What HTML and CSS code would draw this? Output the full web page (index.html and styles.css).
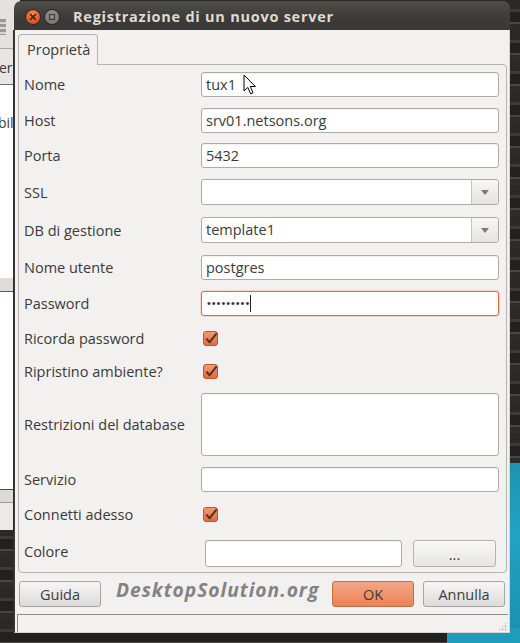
FILE: index.html
```html
<!DOCTYPE html>
<html lang="it">
<head>
<meta charset="utf-8">
<title>Registrazione di un nuovo server</title>
<link rel="stylesheet" href="styles.css">
</head>
<body>
<div class="desktop">
  <div class="teal-right"></div>
  <div class="teal-bottom"></div>

  <div class="bgwin">
    <div class="bw-top"><div class="bw-icon"></div></div>
    <div class="bw-tool"><span class="bw-txt">er</span></div>
    <div class="bw-list"><span class="bw-txt bw-bil">bil</span></div>
    <div class="bw-head"></div>
    <div class="bw-list2"></div>
    <div class="bw-foot1"></div>
    <div class="bw-foot2"></div>
  </div>

  <div class="dialog">
    <div class="titlebar">
      <span class="wbtn close">
        <svg width="14" height="14" viewBox="0 0 14 14"><path d="M4.6 4.6 L9.4 9.4 M9.4 4.6 L4.6 9.4" stroke="#3b2418" stroke-width="1.6" stroke-linecap="round"/></svg>
      </span>
      <span class="wbtn maxi">
        <svg width="14" height="14" viewBox="0 0 14 14"><rect x="4.5" y="4.5" width="5" height="5" fill="none" stroke="#3f3e3a" stroke-width="1.3"/></svg>
      </span>
      <span class="title">Registrazione di un nuovo server</span>
    </div>

    <div class="body">
      <div class="tabs"><div class="tab">Proprietà</div></div>

      <div class="pane">
        <div class="row h36"><span class="lbl">Nome</span><div class="ctl"><div class="entry">tux1</div></div></div>
        <div class="row h36"><span class="lbl">Host</span><div class="ctl"><div class="entry">srv01.netsons.org</div></div></div>
        <div class="row h35"><span class="lbl">Porta</span><div class="ctl"><div class="entry">5432</div></div></div>
        <div class="row h38"><span class="lbl">SSL</span><div class="ctl"><div class="combo"><span class="combo-text"></span><span class="combo-arrow"><span class="tri"></span></span></div></div></div>
        <div class="row h38"><span class="lbl">DB di gestione</span><div class="ctl"><div class="combo"><span class="combo-text">template1</span><span class="combo-arrow"><span class="tri"></span></span></div></div></div>
        <div class="row h36"><span class="lbl">Nome utente</span><div class="ctl"><div class="entry">postgres</div></div></div>
        <div class="row h36"><span class="lbl">Password</span><div class="ctl"><div class="entry focus"><span class="dots">•••••••••</span><span class="caret"></span></div></div></div>
        <div class="row h34"><span class="lbl">Ricorda password</span><div class="ctl"><span class="check"><svg width="15" height="15" viewBox="0 0 15 15"><defs><linearGradient id="cg1" x1="0" y1="0" x2="0" y2="1"><stop offset="0" stop-color="#f49d74"/><stop offset="1" stop-color="#e2683a"/></linearGradient></defs><rect x="0.5" y="0.5" width="14" height="14" rx="2.5" fill="url(#cg1)" stroke="#c0532c"/><path d="M3.3 7.6 L6.6 11.2 L13.6 2.4" fill="none" stroke="#4e362b" stroke-width="2.1" stroke-linejoin="round"/></svg></span></div></div>
        <div class="row h33"><span class="lbl">Ripristino ambiente?</span><div class="ctl"><span class="check"><svg width="15" height="15" viewBox="0 0 15 15"><rect x="0.5" y="0.5" width="14" height="14" rx="2.5" fill="url(#cg1)" stroke="#c0532c"/><path d="M3.3 7.6 L6.6 11.2 L13.6 2.4" fill="none" stroke="#4e362b" stroke-width="2.1" stroke-linejoin="round"/></svg></span></div></div>
        <div class="row h73"><span class="lbl">Restrizioni del database</span><div class="ctl"><div class="textarea"></div></div></div>
        <div class="row h37"><span class="lbl">Servizio</span><div class="ctl"><div class="entry"></div></div></div>
        <div class="row h33"><span class="lbl">Connetti adesso</span><div class="ctl"><span class="check"><svg width="15" height="15" viewBox="0 0 15 15"><rect x="0.5" y="0.5" width="14" height="14" rx="2.5" fill="url(#cg1)" stroke="#c0532c"/><path d="M3.3 7.6 L6.6 11.2 L13.6 2.4" fill="none" stroke="#4e362b" stroke-width="2.1" stroke-linejoin="round"/></svg></span></div></div>
        <div class="row h36 row-end"><span class="lbl lbl-colore">Colore</span><div class="ctl"><div class="entry colore"></div><div class="btn small">...</div></div></div>
      </div>

      <div class="actions">
        <div class="btn">Guida</div>
        <span class="watermark">DesktopSolution.org</span>
        <div class="btn ok">OK</div>
        <div class="btn">Annulla</div>
      </div>

      <div class="status"><span class="grip"></span></div>
    </div>
  </div>

  <svg class="cursor" width="14" height="22" viewBox="0 0 14 22"><path d="M1 1 L1 17 L4.8 13.4 L7.6 19.8 L10 18.8 L7.3 12.5 L12.4 12.5 Z" fill="#ffffff" stroke="#000000" stroke-width="1" stroke-linejoin="round"/></svg>
</div>
</body>
</html>
```
FILE: styles.css
```css
html, body {
  margin: 0;
  padding: 0;
}
body {
  background: #2a2826;
  font-family: "Open Sans", "DejaVu Sans", sans-serif;
  font-size: 14.5px;
  color: #3a3a3a;
}
.desktop {
  position: relative;
  width: 520px;
  height: 643px;
  overflow: hidden;
  background: repeating-linear-gradient(180deg, #2b2927 0 9px, #3d3b38 9px 12px, #232120 12px 22px, #4a4743 22px 24px, #2e2c29 24px 31px);
}
.teal-right {
  position: absolute;
  left: 508px;
  top: 463px;
  width: 12px;
  height: 180px;
  background: linear-gradient(180deg, #1d93b0, #22a3c2 40%, #1b8fab);
}
.teal-bottom {
  position: absolute;
  left: 447px;
  top: 628px;
  width: 73px;
  height: 15px;
  background: #1f9cba;
}

/* background window at the left */
.bgwin {
  position: absolute;
  left: 0;
  top: 0;
  width: 20px;
  height: 530px;
  display: flex;
  flex-direction: column;
  background: #e9e8e6;
  font-size: 14px;
}
.bw-top {
  height: 48px;
  background: #e3e2df;
  border-bottom: 1px solid #a9a8a5;
}
.bw-icon {
  margin-top: 19px;
  width: 6px;
  height: 16px;
  background: repeating-linear-gradient(180deg, #9a9996 0 3px, #d9d8d5 3px 5px);
}
.bw-tool {
  height: 36px;
  background: #e7e6e4;
  border-bottom: 1px solid #6d6c69;
  display: flex;
  align-items: center;
  padding-top: 2px;
  box-sizing: border-box;
}
.bw-txt {
  display: block;
  margin-left: -1px;
  line-height: 16px;
  color: #3c3c3c;
}
.bw-list {
  height: 193px;
  background: #ffffff;
  padding-top: 30px;
  box-sizing: border-box;
}
.bw-bil {
  margin-left: -2px;
}
.bw-head {
  height: 13px;
  background: #dedcd9;
  border-bottom: 1px solid #595855;
}
.bw-list2 {
  height: 197px;
  background: #ffffff;
  border-bottom: 1px solid #4e4d4a;
}
.bw-foot1 {
  height: 12px;
  background: #dcdad7;
  border-bottom: 1px solid #9c9a96;
}
.bw-foot2 {
  flex: 1;
  background: #eceae8;
}

/* dialog */
.dialog {
  position: absolute;
  left: 14px;
  top: 1px;
  width: 496px;
  height: 632px;
  display: flex;
  flex-direction: column;
}
.titlebar {
  height: 29px;
  flex: none;
  border-radius: 7px 7px 0 0;
  background: linear-gradient(180deg, #4f4e4a, #3c3b37 60%, #3a3935);
  display: flex;
  align-items: center;
  padding-left: 12px;
  box-sizing: border-box;
  padding-top: 2px;
}
.wbtn {
  width: 14px;
  height: 14px;
  border-radius: 50%;
  display: block;
  flex: none;
}
.wbtn svg {
  display: block;
}
.close {
  background: radial-gradient(circle at 50% 35%, #f8925d, #e4581f 60%, #c4430f);
  box-shadow: 0 0 0 1px #2c2b28;
}
.maxi {
  margin-left: 5px;
  background: radial-gradient(circle at 50% 35%, #9c9b96, #7c7b76 65%, #65645f);
  box-shadow: 0 0 0 1px #2c2b28;
}
.title {
  margin-left: 14px;
  font-weight: bold;
  font-size: 14.5px;
  color: #dfdbd2;
  letter-spacing: 0.75px;
  white-space: nowrap;
}
.body {
  flex: 1;
  background: #f2f1f0;
  border: 1px solid #d7d5d1;
  border-top: none;
  border-left-color: #3b3a37;
  box-shadow: -1px 0 0 #2f2e2b;
  display: flex;
  flex-direction: column;
}
.tabs {
  margin-top: 4px;
  height: 30px;
  display: flex;
  padding-left: 3px;
}
.tab {
  position: relative;
  z-index: 1;
  width: 80px;
  height: 31px;
  box-sizing: border-box;
  border: 1px solid #b7b4af;
  border-bottom: none;
  border-radius: 4px 4px 0 0;
  background: #f2f1f0;
  padding-left: 8px;
  line-height: 30px;
}
.pane {
  margin: 0 2px 0 3px;
  height: 509px;
  box-sizing: border-box;
  border: 1px solid #b7b4af;
  border-radius: 0 4px 4px 4px;
  padding: 1px 7px 5px 5px;
  display: flex;
  flex-direction: column;
}
.row {
  display: flex;
  align-items: center;
  flex: none;
}
.h33 { height: 33px; }
.h34 { height: 34px; }
.h35 { height: 35px; }
.h36 { height: 36px; }
.h37 { height: 37px; }
.h38 { height: 38px; }
.h73 { height: 73px; }
.row-end {
  align-items: flex-end;
}
.lbl {
  width: 177px;
  flex: none;
  white-space: nowrap;
}
.lbl-colore {
  align-self: center;
  margin-top: 4px;
}
.ctl {
  flex: 1;
  display: flex;
  align-items: center;
}
.entry {
  width: 100%;
  height: 25px;
  box-sizing: border-box;
  border: 1px solid #aeaaa5;
  border-radius: 3px;
  background: #ffffff;
  box-shadow: inset 0 1px 1px rgba(0,0,0,0.06);
  padding: 0 4px;
  display: flex;
  align-items: center;
  white-space: nowrap;
}
.entry.focus {
  border-color: #e46a3f;
  box-shadow: 0 0 0 1px rgba(240,140,100,0.25);
}
.dots {
  font-family: "Liberation Sans", sans-serif;
  font-size: 11px;
  letter-spacing: 0.95px;
  color: #3a3a3a;
  margin-left: 1px;
}
.caret {
  width: 1px;
  height: 17px;
  background: #222222;
}
.combo {
  width: 100%;
  height: 26px;
  box-sizing: border-box;
  border: 1px solid #aeaaa5;
  border-radius: 3px;
  background: #ffffff;
  display: flex;
  overflow: hidden;
}
.combo-text {
  flex: 1;
  padding-left: 4px;
  line-height: 24px;
}
.combo-arrow {
  width: 26px;
  border-left: 1px solid #c9c6c2;
  background: linear-gradient(180deg, #f7f7f6, #e4e3e1);
  display: flex;
  align-items: center;
  justify-content: center;
}
.tri {
  width: 0;
  height: 0;
  border-left: 4px solid transparent;
  border-right: 4px solid transparent;
  border-top: 5px solid #7b7a77;
  margin-top: 1px;
}
.check {
  margin-left: 2px;
  display: block;
  width: 15px;
  height: 15px;
}
.check svg {
  display: block;
}
.textarea {
  width: 100%;
  height: 63px;
  box-sizing: border-box;
  border: 1px solid #aeaaa5;
  border-radius: 3px;
  background: #ffffff;
  box-shadow: inset 0 1px 1px rgba(0,0,0,0.06);
}
.entry.colore {
  width: 197px;
  height: 27px;
  margin-left: 4px;
  flex: none;
}
.btn {
  width: 82px;
  height: 26px;
  box-sizing: border-box;
  border: 1px solid #a7a5a1;
  border-radius: 3px;
  background: linear-gradient(180deg, #f6f5f4, #dedcd9);
  display: flex;
  align-items: center;
  justify-content: center;
  flex: none;
  color: #3c3c3c;
  padding-top: 1px;
}
.btn.small {
  width: 83px;
  height: 27px;
  margin-left: 11px;
  background: linear-gradient(180deg, #f8f8f7, #e6e5e3);
  border-color: #b4b2ae;
}
.btn.ok {
  background: linear-gradient(180deg, #f4a584, #ec8357);
  border-color: #c56c48;
}
.actions {
  margin-top: 8px;
  height: 26px;
  display: flex;
  align-items: center;
  padding: 0 4px;
  gap: 9px;
}
.watermark {
  flex: 1;
  min-width: 0;
  margin-left: 6px;
  font-family: "Open Sans", "DejaVu Sans", sans-serif;
  font-weight: bold;
  font-style: italic;
  font-size: 19.3px;
  color: #838383;
  white-space: nowrap;
  margin-top: -9px;
  letter-spacing: 0.95px;
}
.status {
  margin: 7px 1px 0 2px;
  flex: 1;
  border-top: 1px solid #8e8c88;
  border-left: 1px solid #8e8c88;
  display: flex;
  justify-content: flex-end;
  align-items: flex-end;
}
.grip {
  width: 9px;
  height: 9px;
  margin: 0 1px 1px 0;
  background-image: radial-gradient(circle, #b3b1ac 0.8px, transparent 1.1px);
  background-size: 3px 3px;
  clip-path: polygon(100% 0, 100% 100%, 0 100%);
}
.cursor {
  position: absolute;
  left: 243px;
  top: 74px;
}
```
